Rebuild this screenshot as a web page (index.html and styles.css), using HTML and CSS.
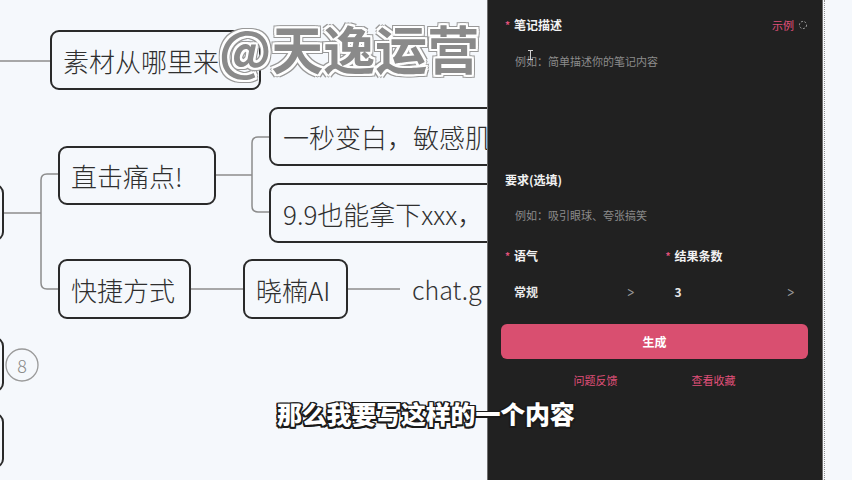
FILE: index.html
```html
<!DOCTYPE html>
<html lang="zh-CN">
<head>
<meta charset="utf-8">
<title>小红书笔记生成</title>
<link rel="stylesheet" href="styles.css">
</head>
<body>
<div class="screen">
  <div class="canvas">
    <svg class="links" width="487" height="480" viewBox="0 0 487 480">
      <path d="M0 61 H50"/>
      <path d="M3 213 H41"/>
      <path d="M58 174 H47 Q41 174 41 180 V283 Q41 289 47 289 H58"/>
      <path d="M215 175 H252"/>
      <path d="M270 137 H258 Q252 137 252 143 V206 Q252 212 258 212 H270"/>
      <path d="M190 289 H243"/>
      <path d="M347 289 H400"/>
      <circle cx="22" cy="365" r="16"/>
    </svg>
    <div class="num">8</div>
    <div class="node n-edge1"></div>
    <div class="node n-edge2"></div>
    <div class="node n-edge3"></div>
    <div class="node n-src">素材从哪里来?</div>
    <div class="node n-pain">直击痛点!</div>
    <div class="node n-white">一秒变白，敏感肌</div>
    <div class="node n-price">9.9也能拿下xxx，</div>
    <div class="node n-fast">快捷方式</div>
    <div class="node n-ai">晓楠AI</div>
    <div class="plain n-chat">chat.g</div>
  </div>

  <div class="panel">
    <div class="label-row">
      <div class="label"><span class="star">*</span>笔记描述</div>
      <div class="example">示例
        <svg class="ex-icon" width="10" height="10" viewBox="0 0 10 10"><circle cx="5" cy="5" r="3.6"/></svg>
      </div>
    </div>
    <div class="field field-desc"><span class="ph">例如：简单描述你的笔记内容</span></div>

    <div class="label-row">
      <div class="label plainlabel">要求(选填)</div>
    </div>
    <div class="field field-req"><span class="ph">例如：吸引眼球、夸张搞笑</span></div>

    <div class="cols">
      <div class="col">
        <div class="label"><span class="star">*</span>语气</div>
        <div class="select"><span class="val">常规</span><span class="chev">&gt;</span></div>
      </div>
      <div class="col">
        <div class="label"><span class="star">*</span>结果条数</div>
        <div class="select"><span class="val">3</span><span class="chev">&gt;</span></div>
      </div>
    </div>

    <button class="gen">生成</button>

    <div class="foot">
      <span class="foot-link">问题反馈</span>
      <span class="foot-link">查看收藏</span>
    </div>
  </div>

  <div class="strip"><div class="strip-dots"></div></div>

  <div class="cursor"></div>
  <div class="watermark">@天逸运营</div>
  <div class="subtitle">那么我要写这样的一个内容</div>
</div>
</body>
</html>
```

FILE: styles.css
```css
* { box-sizing: border-box; margin: 0; padding: 0; }
html, body { width: 852px; height: 480px; overflow: hidden; }
body { font-family: "Noto Sans CJK SC", "Noto Sans", sans-serif; background: #f5f8fc; }

.screen { position: relative; display: flex; width: 852px; height: 480px; }

/* mind map canvas */
.canvas { position: relative; width: 487px; height: 480px; overflow: hidden; background: #f5f8fc; flex: none; }
.links { position: absolute; left: 0; top: 0; }
.links path { fill: none; stroke: #8c8c8c; stroke-width: 1.5; }
.links circle { fill: none; stroke: #9a9a9a; stroke-width: 1.3; }
.num { position: absolute; left: 6px; top: 352px; width: 32px; text-align: center; font-size: 18px; line-height: 26px; color: #8a8a8a; font-weight: 300; }

.node {
  position: absolute; display: flex; align-items: center;
  border: 2.5px solid #2a2a2a; border-radius: 9px; background: #f5f8fc;
  padding-left: 11px; font-size: 26px; font-weight: 300; color: #2f2f2f;
  white-space: nowrap; overflow: hidden;
}
.n-edge1 { left: -30px; top: 184px; width: 34px; height: 57px; }
.n-edge2 { left: -30px; top: 337px; width: 34px; height: 55px; }
.n-edge3 { left: -30px; top: 413px; width: 34px; height: 55px; }
.n-src { left: 50px; top: 30px; width: 211px; height: 60px; }
.n-pain { left: 58px; top: 146px; width: 158px; height: 59px; }
.n-white { left: 269px; top: 107px; width: 260px; height: 59px; padding-left: 12px; }
.n-price { left: 269px; top: 183px; width: 260px; height: 60px; padding-left: 12px; }
.n-fast { left: 58px; top: 259px; width: 133px; height: 60px; }
.n-ai { left: 243px; top: 259px; width: 105px; height: 60px; }
.plain { position: absolute; font-size: 25px; color: #333; font-weight: 300; white-space: nowrap; }
.n-chat { left: 412px; top: 272px; line-height: 34px; }

/* right dark panel */
.panel {
  flex: none; width: 336px; height: 480px; background: #212121;
  border-left: 1px solid #6e6e6e; border-right: 1px solid #6e6e6e;
  padding: 17px 14px 0 13px; display: flex; flex-direction: column;
}
.label-row { display: flex; justify-content: space-between; align-items: center; height: 16px; padding-left: 4px; }
.label { display: flex; align-items: center; gap: 4px; font-size: 12px; line-height: 16px; font-weight: 700; color: #f2f2f2; }
.plainlabel { gap: 0; }
.star { color: #e0507a; font-size: 10px; font-weight: 700; width: 5px; }
.example { display: flex; align-items: center; gap: 4px; font-size: 11px; color: #e0507a; }
.ex-icon circle { fill: none; stroke: #9a9a9a; stroke-width: 1; stroke-dasharray: 2 1.6; }
.field { padding-left: 14px; }
.field-desc { height: 139px; padding-top: 14px; }
.field-req { height: 60px; padding-top: 13px; }
.ph { font-size: 11px; line-height: 16px; color: #8c8c8c; }

.cols { display: grid; grid-template-columns: 1fr 1fr; gap: 14px; }
.col .label { padding-left: 4px; height: 16px; }
.select { display: flex; justify-content: space-between; align-items: center; height: 60px; padding: 20px 11px 24px 13px; }
.val { font-size: 12px; line-height: 16px; font-weight: 700; color: #e8e8e8; }
.chev { font-size: 14px; line-height: 16px; color: #9a9a9a; font-family: "DejaVu Sans", sans-serif; transform: scaleX(0.65); }

.gen {
  height: 35px; width: 100%; border: none; border-radius: 6px; background: #d94f70;
  color: #fff; font-family: inherit; font-size: 12px; font-weight: 700;
}
.foot { display: flex; justify-content: center; gap: 74px; margin-top: 13px; }
.foot-link { font-size: 11px; line-height: 16px; color: #e0507a; }

/* right strip */
.strip { flex: 1; height: 480px; background: #f5f8fc; padding-left: 1px; }
.strip-dots { height: 100%; border-left: 1px dotted #8e8e8e; }

/* overlays */
.cursor { position: absolute; left: 530px; top: 50px; width: 1px; height: 10px; background: #cfcfcf; }
.cursor::before, .cursor::after { content: ""; position: absolute; left: -2px; width: 5px; height: 1px; background: #cfcfcf; }
.cursor::before { top: 0; }
.cursor::after { bottom: 0; }

.watermark {
  position: absolute; left: 219px; top: 15px; font-size: 52px; line-height: 66px; font-weight: 700;
  color: #8a8a8a; white-space: nowrap;
  text-shadow:
    2px 0 0 #fff, -2px 0 0 #fff, 0 2px 0 #fff, 0 -2px 0 #fff,
    2px 2px 0 #fff, -2px -2px 0 #fff, 2px -2px 0 #fff, -2px 2px 0 #fff,
    3px 0 0 #999, -3px 0 0 #999, 0 3px 0 #999, 0 -3px 0 #999,
    3px 3px 0 #999, -3px -3px 0 #999, 3px -3px 0 #999, -3px 3px 0 #999;
}
.subtitle {
  position: absolute; left: 277px; top: 396px; font-size: 25px; line-height: 34px; font-weight: 900;
  color: #fff; white-space: nowrap; letter-spacing: -0.2px;
  text-shadow:
    1.5px 0 0 #1a1a1a, -1.5px 0 0 #1a1a1a, 0 1.5px 0 #1a1a1a, 0 -1.5px 0 #1a1a1a,
    1.5px 1.5px 0 #1a1a1a, -1.5px -1.5px 0 #1a1a1a, 1.5px -1.5px 0 #1a1a1a, -1.5px 1.5px 0 #1a1a1a;
}
```
